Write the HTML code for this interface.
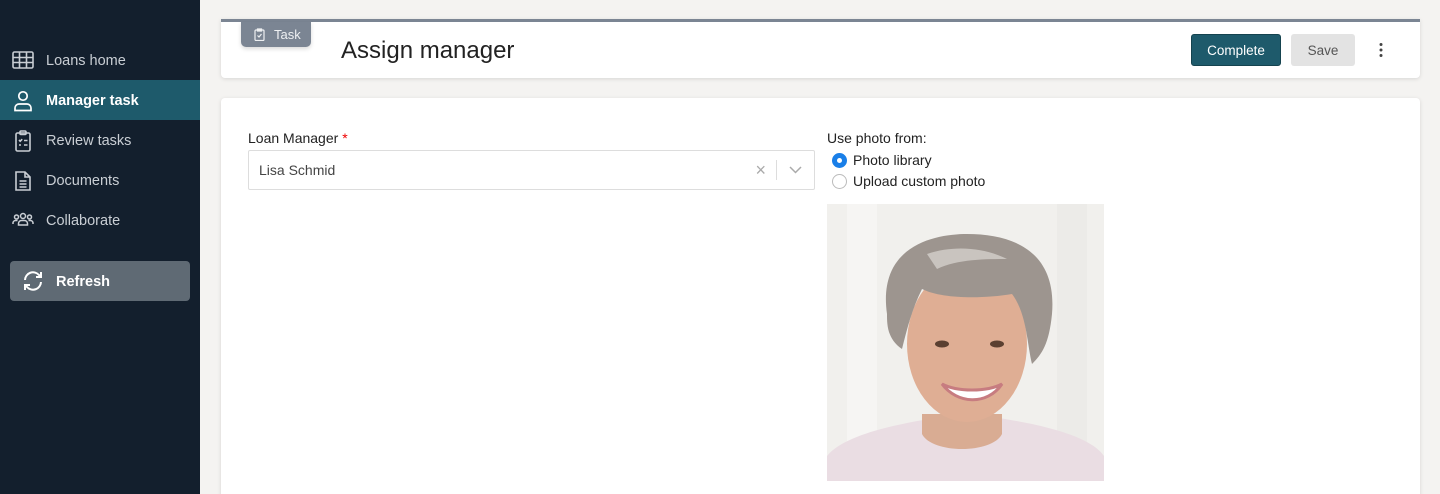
<!DOCTYPE html>
<html><head><meta charset="utf-8"><style>
*{box-sizing:border-box;margin:0;padding:0}
html{width:1440px;height:494px;overflow:hidden}
body{width:1440px;height:494px;overflow:hidden;background:#f4f3f1;font-family:"Liberation Sans",sans-serif;position:relative}
.sb{position:absolute;left:0;top:0;width:200px;height:494px;background:#131f2d}
.it{position:absolute;left:0;width:200px;height:40px;color:#c9ced4;font-size:14.5px;display:flex;align-items:center;padding-left:46px;padding-top:2px}
.it svg{position:absolute;left:12px;top:10px}
.act{background:#1e5a6b;color:#fff;font-weight:bold}
.ref{position:absolute;left:10px;top:261px;width:180px;height:40px;background:#5f6a74;border-radius:4px;color:#fff;font-weight:bold;font-size:14.5px;display:flex;align-items:center;padding-left:46px;padding-top:2px}
.card{position:absolute;left:221px;width:1199px;background:#fff;border-radius:4px;box-shadow:0 1px 4px rgba(0,0,0,.12)}
.btn{position:absolute;top:34px;height:32px;border-radius:3px;font-size:13.5px;display:flex;align-items:center;justify-content:center}
</style></head><body>
<div class="sb">
<div class="it" style="top:40px"><svg width="22" height="20" viewBox="0 0 22 20" fill="none" stroke="#c9ced4" stroke-width="1.6"><rect x="1" y="2" width="20" height="16" rx="1.5"/><path d="M1 7.5h20M1 12.5h20M7.5 2v16M14.5 2v16"/></svg>Loans home</div>
<div class="it act" style="top:80px"><svg width="22" height="22" viewBox="0 0 22 22" fill="none" stroke="#fff" stroke-width="1.7"><circle cx="11" cy="6" r="4.2"/><path d="M3 20.5v-2.5a4 4 0 0 1 4-4h8a4 4 0 0 1 4 4v2.5z"/></svg>Manager task</div>
<div class="it" style="top:120px"><svg width="22" height="22" viewBox="0 0 22 22" fill="none" stroke="#c9ced4" stroke-width="1.6"><rect x="4" y="3" width="14" height="18" rx="1.5"/><rect x="8" y="1" width="6" height="3.5" rx="1"/><path d="M7 10l1.2 1.2 2-2M12 10.5h3.5M7 15h2M12 15h3.5"/></svg>Review tasks</div>
<div class="it" style="top:160px"><svg width="22" height="22" viewBox="0 0 22 22" fill="none" stroke="#c9ced4" stroke-width="1.6"><path d="M4 2h9l5 5v13H4z"/><path d="M13 2v5h5M7.5 11h7M7.5 14h7M7.5 17h7"/></svg>Documents</div>
<div class="it" style="top:200px"><svg width="22" height="20" viewBox="0 0 22 20" fill="none" stroke="#c9ced4" stroke-width="1.5"><circle cx="11" cy="6" r="2.5"/><circle cx="4.5" cy="7" r="2"/><circle cx="17.5" cy="7" r="2"/><path d="M6.5 15v-1.5a3 3 0 0 1 3-3h3a3 3 0 0 1 3 3V15zM1 14v-1a2.5 2.5 0 0 1 2.5-2.5h2M21 14v-1a2.5 2.5 0 0 0-2.5-2.5h-2"/></svg>Collaborate</div>
<div class="ref"><svg style="position:absolute;left:12px;top:9px" width="22" height="22" viewBox="0 0 22 22" fill="none" stroke="#fff" stroke-width="2"><path d="M3 10a8 8 0 0 1 14-5l2 2M19 2v5h-5M19 12a8 8 0 0 1-14 5l-2-2M3 20v-5h5"/></svg>Refresh</div>
</div>
<div class="card" style="top:19px;height:59px;border-top:3px solid #7b8593;border-radius:0 0 4px 4px">
<div style="position:absolute;left:20px;top:0;width:70px;height:25px;background:#7b8593;border-radius:0 0 5px 5px;color:#eef0f2;font-size:13px;display:flex;align-items:center;padding-left:33px;box-shadow:0 2px 4px rgba(0,0,0,.15)"><svg style="position:absolute;left:13px;top:6px" width="11" height="13" viewBox="0 0 11 13" fill="none" stroke="#eef0f2" stroke-width="1.2"><rect x="1" y="2" width="9" height="10.5" rx="1"/><path d="M3.5 1h4v2h-4zM3.5 7.5l1.5 1.5 2.5-3"/></svg>Task</div>
<div style="position:absolute;left:120px;top:15px;font-size:24px;color:#222">Assign manager</div>
</div>
<div class="btn" style="left:1191px;width:90px;background:#1e5a6b;color:#fff;border:1px solid #15434f">Complete</div>
<div class="btn" style="left:1291px;width:64px;background:#e3e3e3;color:#555">Save</div>
<svg style="position:absolute;left:1378px;top:42px" width="6" height="16"><circle cx="3" cy="2.5" r="1.5" fill="#444"/><circle cx="3" cy="8" r="1.5" fill="#444"/><circle cx="3" cy="13.5" r="1.5" fill="#444"/></svg>
<div class="card" style="top:98px;height:420px">
<div style="position:absolute;left:27px;top:32px;font-size:14px;color:#222">Loan Manager <span style="color:#e00">*</span></div>
<div style="position:absolute;left:27px;top:52px;width:567px;height:40px;border:1px solid #ddd;border-radius:2px;font-size:14px;color:#444;padding:11px 0 0 10px">Lisa Schmid
<span style="position:absolute;right:48px;top:9px;color:#aaa;font-size:18px">×</span>
<span style="position:absolute;right:37px;top:9px;width:1px;height:20px;background:#ddd"></span>
<svg style="position:absolute;right:12px;top:15px" width="13" height="8" fill="none" stroke="#aaa" stroke-width="1.5"><path d="M1 1l5.5 5.5L12 1"/></svg></div>
<div style="position:absolute;left:606px;top:32px;font-size:14px;color:#222">Use photo from:</div>
<div style="position:absolute;left:611px;top:55px;width:15px;height:15px;border-radius:50%;background:#1a7fe8"><div style="position:absolute;left:5px;top:5px;width:5px;height:5px;border-radius:50%;background:#fff"></div></div>
<div style="position:absolute;left:632px;top:54px;font-size:14px;color:#222">Photo library</div>
<div style="position:absolute;left:611px;top:76px;width:15px;height:15px;border-radius:50%;border:1px solid #bbb"></div>
<div style="position:absolute;left:632px;top:75px;font-size:14px;color:#222">Upload custom photo</div>
<svg style="position:absolute;left:606px;top:106px" width="277" height="277" viewBox="0 0 277 277">
<rect width="277" height="277" fill="#f1f0ed"/>
<rect x="20" width="30" height="277" fill="#f6f5f3"/><rect x="230" width="30" height="277" fill="#ecebe8"/>
<path d="M0 277v-25c20-25 90-35 120-40h40c30 5 100 15 117 40v25z" fill="#eadde3"/>
<path d="M95 210h80v20c-10 20-70 20-80 0z" fill="#d9ac93"/>
<ellipse cx="140" cy="140" rx="60" ry="78" fill="#dfae94"/>
<path d="M60 110c-10-70 50-80 80-80 50 0 90 20 85 80-3 30-10 40-20 50-5-20-5-50-20-70-30 5-70 5-90-5-10 20-15 40-20 60-15-10-15-25-15-35z" fill="#9d958f"/>
<path d="M100 50c30-10 60-5 80 5-20 0-50 0-70 10z" fill="#c9c4bf"/>
<ellipse cx="115" cy="140" rx="7" ry="3.5" fill="#5b4031"/><ellipse cx="170" cy="140" rx="7" ry="3.5" fill="#5b4031"/>
<path d="M115 180c15 20 45 22 60 0-15 8-45 8-60 0z" fill="#fff" stroke="#c77c80" stroke-width="3"/>
</svg>
</div>
</body></html>
